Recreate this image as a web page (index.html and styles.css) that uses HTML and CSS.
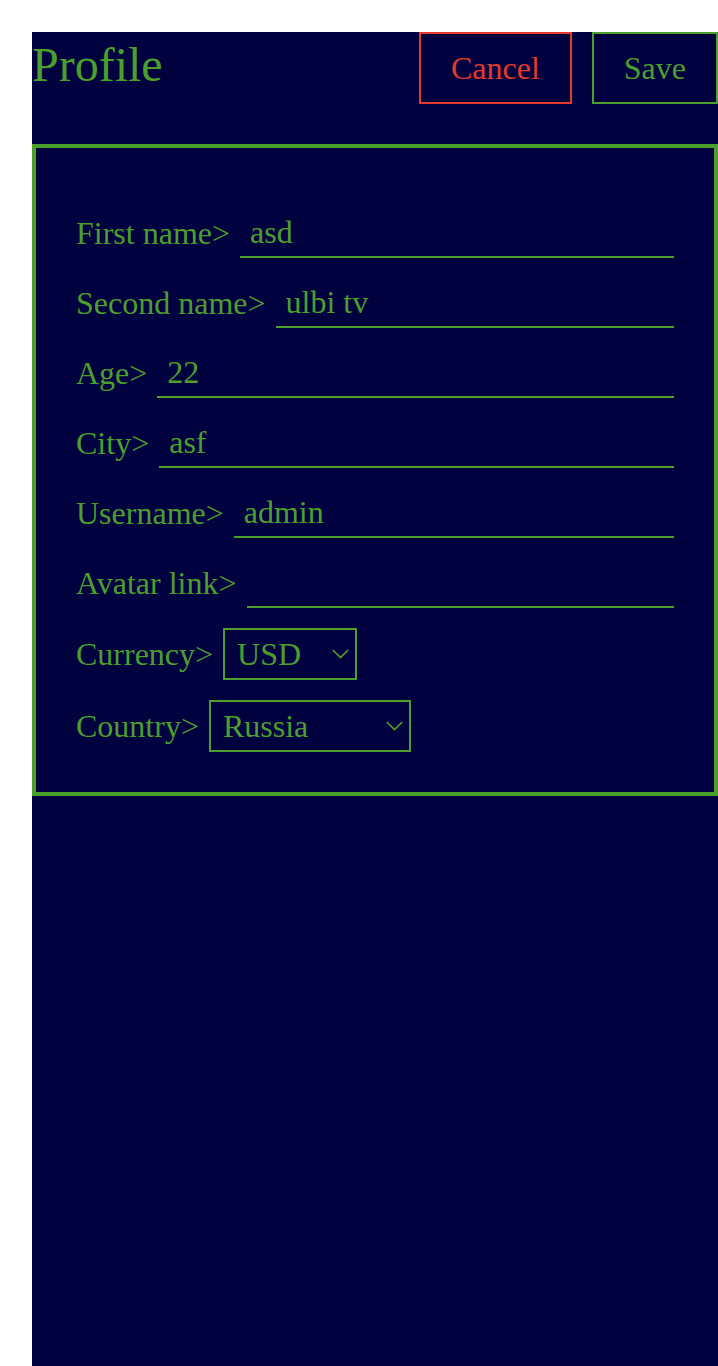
FILE: index.html
```html
<!DOCTYPE html>
<html lang="en">
<head>
<meta charset="utf-8">
<title>Profile</title>
<link rel="stylesheet" href="styles.css">
</head>
<body>
<div class="page">
  <div class="app">
    <header class="header">
      <h1 class="title">Profile</h1>
      <div class="actions">
        <button class="btn btn-cancel" type="button">Cancel</button>
        <button class="btn btn-save" type="button">Save</button>
      </div>
    </header>
    <section class="card">
      <div class="row">
        <span class="label">First name&gt;</span>
        <input class="field" type="text" value="asd">
      </div>
      <div class="row">
        <span class="label">Second name&gt;</span>
        <input class="field" type="text" value="ulbi tv">
      </div>
      <div class="row">
        <span class="label">Age&gt;</span>
        <input class="field" type="text" value="22">
      </div>
      <div class="row">
        <span class="label">City&gt;</span>
        <input class="field" type="text" value="asf">
      </div>
      <div class="row">
        <span class="label">Username&gt;</span>
        <input class="field" type="text" value="admin">
      </div>
      <div class="row">
        <span class="label">Avatar link&gt;</span>
        <input class="field" type="text" value="">
      </div>
      <div class="row">
        <span class="label">Currency&gt;</span>
        <div class="select-wrap select-currency">
          <select class="select">
            <option>USD</option>
            <option>EUR</option>
            <option>RUB</option>
          </select>
          <svg class="chevron" width="17" height="10" viewBox="0 0 17 10"><path d="M0.8 1 L8.5 8.6 L16.2 1" fill="none" stroke="#4a9f2d" stroke-width="1.7"/></svg>
        </div>
      </div>
      <div class="row">
        <span class="label">Country&gt;</span>
        <div class="select-wrap select-country">
          <select class="select">
            <option>Russia</option>
            <option>Belarus</option>
            <option>Ukraine</option>
          </select>
          <svg class="chevron" width="17" height="10" viewBox="0 0 17 10"><path d="M0.8 1 L8.5 8.6 L16.2 1" fill="none" stroke="#4a9f2d" stroke-width="1.7"/></svg>
        </div>
      </div>
    </section>
  </div>
</div>
</body>
</html>
```

FILE: styles.css
```css
html, body {
  margin: 0;
  padding: 0;
  background: #ffffff;
}

.page {
  padding: 32px 0 0 32px;
}

.app {
  background: #020140;
  min-height: 1334px;
  font-family: "Liberation Serif", "Times New Roman", serif;
  color: #4a9f2d;
}

.header {
  display: flex;
  justify-content: space-between;
  align-items: flex-start;
  height: 72px;
}

.title {
  margin: 0;
  padding-top: 5px;
  font-size: 48px;
  font-weight: normal;
  line-height: normal;
  color: #4a9f2d;
}

.actions {
  display: flex;
  gap: 20px;
}

.btn {
  height: 72px;
  padding: 0 30px;
  background: transparent;
  font-family: "Liberation Serif", "Times New Roman", serif;
  font-size: 32px;
  border: 2px solid;
  cursor: pointer;
}

.btn-cancel {
  color: #e5392a;
  border-color: #e5392a;
}

.btn-save {
  color: #4a9f2d;
  border-color: #4a9f2d;
}

.card {
  margin-top: 40px;
  border: 4px solid #4a9f2d;
  padding: 40px;
}

.row {
  display: flex;
  align-items: center;
  margin-top: 20px;
}

.label {
  font-size: 32px;
  margin-right: 10px;
  white-space: nowrap;
}

.field {
  flex: 1;
  min-width: 0;
  height: 50px;
  box-sizing: border-box;
  padding: 0 10px;
  border: none;
  border-bottom: 2px solid #4a9f2d;
  background: transparent;
  color: #4a9f2d;
  font-family: "Liberation Serif", "Times New Roman", serif;
  font-size: 32px;
  outline: none;
}

.select-wrap {
  position: relative;
  height: 52px;
}

.select-currency {
  width: 134px;
}

.select-country {
  width: 202px;
}

.select {
  appearance: none;
  -webkit-appearance: none;
  width: 100%;
  height: 52px;
  box-sizing: border-box;
  padding: 0 30px 0 12px;
  border: 2px solid #4a9f2d;
  border-radius: 0;
  background: transparent;
  color: #4a9f2d;
  font-family: "Liberation Serif", "Times New Roman", serif;
  font-size: 32px;
  outline: none;
}

.chevron {
  position: absolute;
  right: 8px;
  top: 21px;
  pointer-events: none;
}
```
